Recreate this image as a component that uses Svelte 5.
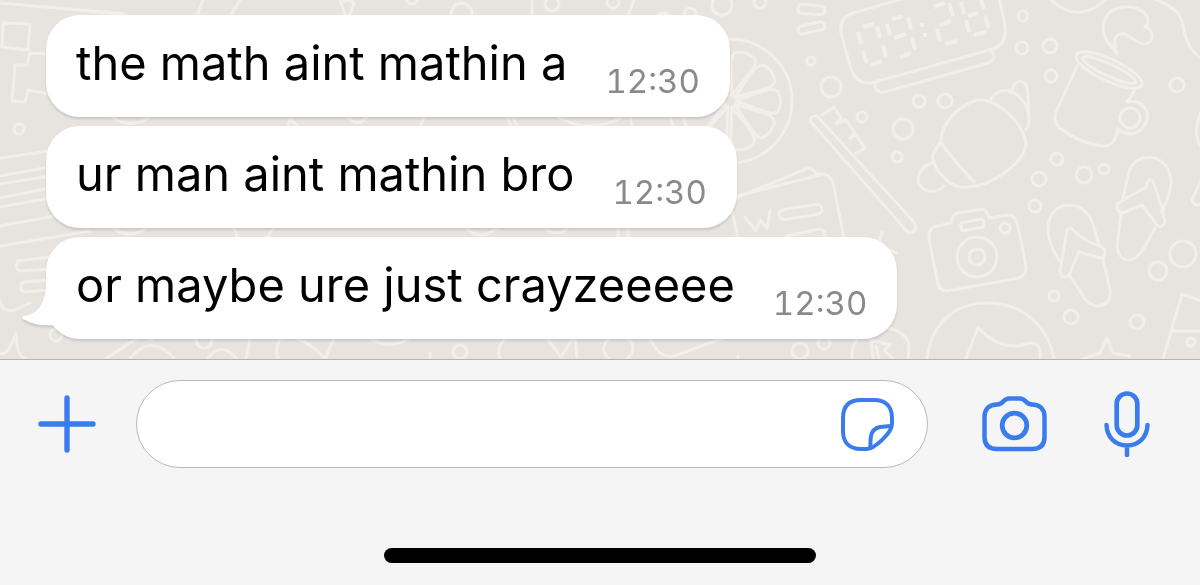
<script>
  let draft = '';

  const messages = [
    { text: 'the math aint mathin a', time: '12:30' },
    { text: 'ur man aint mathin bro', time: '12:30' },
    { text: 'or maybe ure just crayzeeeee', time: '12:30' }
  ];

  // loose dots between the doodles: x, y, radius
  const dots = [
    [552, 4, 7], [613, 2, 6], [690, 14, 6],
    [760, 2, 6], [722, 5, 10], [811, 61, 4], [831, 87, 10], [862, 117, 5], [919, 101, 6], [945, 101, 7],
    [903, 129, 10], [897, 157, 5], [1023, 16, 5], [1022, 48, 6], [1050, 46, 7], [1051, 76, 6],
    [1177, 85, 7], [1057, 159, 6], [1084, 175, 8], [1104, 169, 5], [1039, 179, 7], [1035, 206, 6],
    [1183, 254, 13], [1158, 271, 9], [1054, 296, 5], [1071, 317, 7], [1137, 322, 7], [1191, 342, 4],
    [19, 129, 5], [800, 351, 8], [824, 343, 6], [56, 335, 6], [204, 340, 8], [460, 352, 7]
  ];

  // segments of the lemon slice, in degrees
  const segments = [-112, -72, -36, 0, 36, 72, 112, 148, 184, 216];
</script>

<main class="screen">
  <section class="chat">
    <svg class="wallpaper" viewBox="0 0 1200 359" preserveAspectRatio="xMaxYMin slice" aria-hidden="true">
      {#each dots as [x, y, r]}
        <circle cx={x} cy={y} {r} />
      {/each}

      <g transform="translate(730 101)">
        <circle r="62" />
        {#each segments as angle}
          <path transform="rotate({angle})" d="M6 0 L36 -11 Q48 -13 49 -7 Q52 0 49 8 Q47 15 36 11 Z" />
        {/each}
      </g>

      <!-- alarm clock -->
      <path d="M905 -2 L853 13 Q839 18 841 33 L850 66 Q855 84 871 83 L993 49 Q1008 43 1005 25 L999 -2" />
      <path d="M875 83 Q875 94 885 92 L988 63 Q998 58 991 50" />
      <g class="digits">
        <path d="M863 27 L874 24 M858 32 L861 44 M877 26 L880 38 M863 51 L867 63 M883 45 L886 57 M871 65 L882 61" />
        <path d="M892 19 L903 16 M887 24 L890 35 M908 17 L911 29 M894 38 L906 34 M912 37 L915 50 M900 57 L911 53" />
        <path d="M920 25 h4 M923 35 h4" />
        <path d="M934 7 L945 3 M949 3 L953 16 M940 25 L951 21 M937 29 L940 41 M945 44 L957 41" />
        <path d="M961 2 L964 14 M981 0 L984 9 M968 16 L978 13 M966 20 L969 32 M985 16 L989 28 M974 35 L986 32" />
      </g>
      <rect x="798" y="5" width="27" height="9" rx="4" transform="rotate(5 811 9)" />
      <rect x="798" y="24" width="27" height="8" rx="4" transform="rotate(-12 811 28)" />

      <!-- toothbrush -->
      <path d="M811 122 Q809 115 817 116 L914 222 Q918 231 911 233 Q908 233 905 229 Z" />
      <path d="M822 115 L834 107 L841 118 L836 124 L846 120 L855 133 L850 138 L856 135 L865 148 L855 154" />

      <!-- teapot -->
      <path d="M941 143 C940 120 968 98 983 100 C1002 103 1024 125 1026 144 C1025 162 990 190 960 187 C945 184 932 166 933 155 Q935 148 941 143 Q955 162 974 182 M932 163 C915 169 915 184 925 190 Q935 194 944 186" />
      <path d="M991 99 C1002 82 1023 93 1028 111 Q1031 122 1026 130 M1011 92 C1016 77 1027 78 1028 94 L1029 115" />

      <!-- mug -->
      <ellipse cx="1109" cy="70" rx="36" ry="11" transform="rotate(25 1109 70)" />
      <ellipse cx="1109" cy="70" rx="29" ry="6" transform="rotate(25 1109 70)" />
      <path d="M1077 66 L1056 112 Q1052 121 1060 128 Q1080 144 1104 146 Q1115 146 1118 129 Q1130 139 1142 129 Q1153 115 1142 105 Q1136 100 1127 102 L1135 90" />
      <circle cx="1130" cy="118" r="10" />
      <path d="M1117 54 L1107 41 C1098 26 1105 8 1125 7 C1142 6 1151 17 1147 25 Q1142 27 1147 27 C1156 33 1152 45 1144 44 C1132 42 1129 32 1120 34 Q1111 37 1117 54" />
      <path d="M1050 -1 Q1077 26 1108 -2 M1150 -3 C1172 7 1181 9 1184 30 Q1188 51 1202 59" />

      <!-- camera -->
      <path d="M934 227 L951 223 Q952 213 959 213 L982 209 Q987 210 989 218 L1010 215 Q1016 217 1018 226 L1026 266 Q1027 275 1019 278 L947 291 Q940 291 938 284 L929 239 Q928 229 934 227 Z" />
      <rect x="961" y="221" width="23" height="8" rx="2" transform="rotate(-10 972 225)" />
      <circle cx="977" cy="257" r="20" />
      <circle cx="977" cy="257" r="8" />
      <circle cx="1005" cy="228" r="5" />

      <!-- flip-flops -->
      <path d="M1060 261 C1041 236 1045 205 1070 205 C1092 206 1094 229 1099 245 L1105 250 Q1106 257 1100 258 L1079 252 L1069 275 Q1061 280 1060 272 L1067 230 Q1070 225 1074 231 Q1084 241 1100 246 M1103 259 L1110 290 Q1112 304 1098 306 Q1087 305 1082 294 L1069 275" />
      <path d="M1123 199 L1129 171 C1137 151 1166 153 1170 176 Q1174 187 1162 211 L1165 222 Q1162 229 1157 225 L1142 205 L1122 213 Q1115 210 1118 203 L1146 187 Q1148 177 1153 181 L1163 211 M1121 214 L1117 246 Q1119 260 1128 260 Q1137 260 1144 248 L1155 228" />

      <!-- person and star -->
      <path d="M927 359 C932 320 957 303 988 303 C1025 303 1049 329 1054 359 M966 359 L978 327 C990 342 1010 350 1026 344 Q1042 339 1040 359" />
      <path d="M1083 359 L1100 353 L1107 338 L1113 353 L1130 356" />
      <path d="M1163 359 L1182 294 L1202 301 M1173 331 L1202 331" />
      <path d="M1202 111 Q1192 130 1200 146 M1202 178 L1192 200 Q1194 208 1202 203" />

      <!-- papers -->
      <path d="M733 199 L806 169 Q812 167 816 174 Q829 172 833 182 L844 238 M733 197 L820 175 M732 211 L738 238" />
      <path d="M745 217 L756 231 L760 220 L767 228 L770 210" />
      <rect x="779" y="207" width="43" height="10" rx="5" transform="rotate(-9 800 212)" />
      <path d="M786 236 L820 229 Q826 230 825 238" />
      <path d="M882 232 L879 244 M896 253 L886 248" />
      <path d="M852 359 C850 318 906 322 909 345 L908 359 M873 359 L871 340 L890 345 L884 350 L893 359 M879 359 L876 346" />

      <!-- left edge -->
      <path d="M0 3 L125 14 M197 15 L204 -2 M231 15 L241 -2" />
      <path d="M3 23 L30 24 L28 50 L2 47 Z M50 54 L30 53 L27 65 L15 65 L12 101 L25 102 L28 90 L50 94" />
      <path d="M0 158 L50 151 M0 176 L50 167 M0 184 L50 176 M0 198 L50 188 M0 207 L50 198 M0 226 L60 215 M0 246 L90 231" />
      <path d="M50 257 L18 261 Q14 268 20 271 L50 269 M50 280 L23 282 Q18 288 24 292 L50 290 M0 301 Q2 313 15 310 L30 303" />
      <path d="M0 353 Q8 357 16 333 Q17 359 26 358 M105 359 L141 336 L152 340 M130 358 Q151 333 174 358 M208 358 Q221 341 236 358" />

      <!-- above and between the bubbles -->
      <path d="M340 0 L345 15 M342 2 Q352 -2 354 4 L350 15 M406 0 Q412 8 418 0 M451 15 Q452 3 462 3 Q472 4 472 15 M532 0 V15 M634 0 L628 15 M658 15 Q663 11 668 15" />
      <path d="M112 117 Q130 130 150 117 M288 126 L290 119 L298 126 M348 117 Q357 128 367 117 M424 117 L420 126 M507 117 L511 126 M513 117 L517 126 M558 117 Q590 135 622 117 M630 117 L632 126" />
      <path d="M113 228 Q130 240 147 228 M234 228 Q238 234 236 238 M273 228 L267 238 M466 228 Q480 242 497 228 M545 228 Q556 238 568 228 M618 228 V238 M628 228 V238" />

      <!-- strip below the last bubble -->
      <path d="M250 338 L246 359 M278 359 C270 330 300 330 325 359 L334 338 M370 338 Q390 351 410 338 M430 359 v-6" />
      <path d="M508 338 Q495 345 500 359 M547 338 L561 357 L572 340 M575 338 L577 357 M610 338 Q598 348 609 359 M627 338 Q639 348 627 359 M650 338 Q659 359 674 356 L724 338 M738 356 v2" />
    </svg>

    <ol class="messages">
      {#each messages as message, i}
        <li class="bubble">
          <span class="text">{message.text}</span>
          <time>{message.time}</time>
          {#if i === messages.length - 1}
            <svg class="tail" viewBox="0 0 50 60" aria-hidden="true">
              <path d="M24 0 C24 24 17 35 2 37 C-1 38 0 40 3 41 C12 46 22 47 32 46 L50 30 L50 0 Z" />
            </svg>
          {/if}
        </li>
      {/each}
    </ol>
  </section>

  <footer>
    <form class="composer" on:submit|preventDefault>
      <button type="button" class="attach" aria-label="Attach">
        <svg viewBox="0 0 58 58" width="58" height="58">
          <path d="M29 3 V55 M3 29 H55" stroke-width="5.4" />
        </svg>
      </button>
      <div class="field">
        <input type="text" aria-label="Message" bind:value={draft} />
        <button type="button" aria-label="Stickers">
          <svg viewBox="0 0 53 53" width="53" height="53">
            <path d="M51 26 V20 C51 8 44 2 33 2 H20 C8 2 2 8 2 20 V33 C2 44 8 51 20 51 H26 C33 51 51 35 51 26 Z" stroke-width="4" />
            <path d="M29 50 C30 46 29 42 30 38 C31 33 34 30 39 29 L50 28" stroke-width="4" />
          </svg>
        </button>
      </div>
      <button type="button" class="camera" aria-label="Camera">
        <svg viewBox="0 0 65 56" width="65" height="56">
          <path d="M27 2.5 H38 C44 2.5 43 8.5 50 8.5 C58 8.5 62.5 13 62.5 21 V41 C62.5 49 58 53 50 53 H15 C7 53 2.5 49 2.5 41 V21 C2.5 13 7 8.5 15 8.5 C22 8.5 21 2.5 27 2.5 Z" stroke-width="4.5" />
          <circle cx="32.5" cy="29.5" r="12.3" stroke-width="4.8" />
        </svg>
      </button>
      <button type="button" class="mic" aria-label="Record voice message">
        <svg viewBox="0 0 46 66" width="46" height="66">
          <rect x="12.7" y="2.5" width="20.6" height="42" rx="10.3" stroke-width="4.7" />
          <path d="M2.5 34 C3 46 11 54.5 23 54.5 C35 54.5 43 46 43.5 34 M23 55 V64" stroke-width="4.5" />
        </svg>
      </button>
    </form>
    <div class="home-bar"></div>
  </footer>
</main>

<style>
  :global(body) {
    background: #f5f5f5;
  }
  .screen {
    font-family: Inter, "Liberation Sans", sans-serif;
    color: #000;
  }
  .chat {
    position: relative;
    overflow: hidden;
    padding: 15px 46px 20px;
    background: #e7e4df;
    border-bottom: 1px solid #b5b4b1;
  }
  .wallpaper {
    position: absolute;
    top: 0;
    left: 0;
    width: 100%;
    height: 100%;
    fill: none;
    stroke: #f2efea;
    stroke-width: 3;
    stroke-linecap: round;
    stroke-linejoin: round;
  }
  .digits {
    stroke-width: 4;
    stroke-linecap: butt;
  }
  .messages {
    position: relative;
    display: flex;
    flex-direction: column;
    align-items: flex-start;
    gap: 9px;
    margin: 0;
    padding: 0;
    list-style: none;
  }
  .bubble {
    position: relative;
    display: flex;
    gap: 38px;
    padding: 13px 30px 19px;
    border-radius: 34px;
    background: #fff;
    filter: drop-shadow(0 2px 1px rgba(0, 0, 0, 0.13));
  }
  .text {
    font-size: 47px;
    line-height: 70px;
  }
  time {
    align-self: flex-end;
    color: #8a8a8d;
    font-size: 33px;
    font-variant-numeric: tabular-nums;
    line-height: 34px;
  }
  .tail {
    position: absolute;
    left: -24px;
    bottom: 0;
    width: 50px;
    height: 60px;
    fill: #fff;
  }
  footer {
    padding: 20px 0 22px;
    background: #f5f5f5;
  }
  .composer {
    display: flex;
    align-items: center;
    padding: 0 50px 0 38px;
  }
  button {
    flex: none;
    padding: 0;
    border: 0;
    background: none;
    cursor: pointer;
  }
  button svg {
    display: block;
    fill: none;
    stroke: #3b7cec;
    stroke-linecap: round;
    stroke-linejoin: round;
  }
  .field {
    flex: 1;
    display: flex;
    align-items: center;
    box-sizing: border-box;
    height: 88px;
    margin: 0 54px 0 40px;
    padding: 0 33px 0 40px;
    border: 1px solid #b9b9bb;
    border-radius: 44px;
    background: #fff;
  }
  input {
    flex: 1;
    min-width: 0;
    border: 0;
    outline: none;
    background: none;
    font: inherit;
    font-size: 40px;
  }
  .camera {
    margin-right: 57px;
  }
  .home-bar {
    width: 36%;
    height: 15px;
    margin: 80px auto 0;
    border-radius: 8px;
    background: #000;
  }
</style>
